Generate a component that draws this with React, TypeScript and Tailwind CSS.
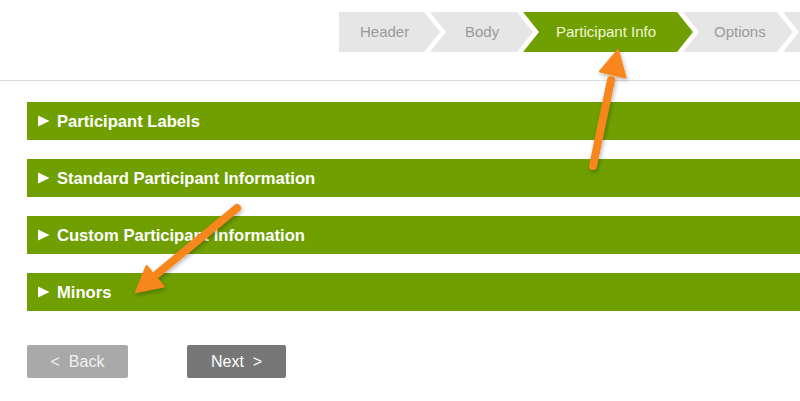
import React from "react";

const clipFirst =
  "[clip-path:polygon(0_0,calc(100%_-_16px)_0,100%_50%,calc(100%_-_16px)_100%,0_100%)]";
const clipMid =
  "[clip-path:polygon(0_0,calc(100%_-_16px)_0,100%_50%,calc(100%_-_16px)_100%,0_100%,16px_50%)]";

function Bar({ label }: { label: string }) {
  return (
    <div className="h-[38px] bg-[#6f9f00] flex items-center pl-[11px] text-white font-bold text-[16.6px]">
      <svg width="12" height="12" viewBox="0 0 12 12" className="mr-[7px]">
        <polygon points="0,0.5 11.5,6 0,11.5" fill="#ffffff" />
      </svg>
      <span className="relative top-[1px]">{label}</span>
    </div>
  );
}

export default function App() {
  return (
    <div className="relative w-[800px] h-[401px] bg-white overflow-hidden font-['Liberation_Sans',Arial,sans-serif]">
      <div className="h-[81px] border-b border-[#dcdcdc] pt-[12px] pl-[339px] flex">
        <div className={`h-[40px] w-[101px] shrink-0 bg-[#e6e6e6] text-[#9a9a9a] text-[15px] flex items-center pl-[21px] ${clipFirst}`}>
          Header
        </div>
        <div className={`h-[40px] w-[103px] shrink-0 -ml-[10px] bg-[#e6e6e6] text-[#9a9a9a] text-[15px] flex items-center pl-[35px] ${clipMid}`}>
          Body
        </div>
        <div className={`h-[40px] w-[170px] shrink-0 -ml-[10px] bg-[#6f9f00] text-[#f2f7d8] text-[15px] flex items-center pl-[33px] ${clipMid}`}>
          Participant Info
        </div>
        <div className={`h-[40px] w-[110px] shrink-0 -ml-[10px] bg-[#e6e6e6] text-[#9a9a9a] text-[15px] flex items-center pl-[31px] ${clipMid}`}>
          Options
        </div>
        <div className={`h-[40px] w-[110px] shrink-0 -ml-[10px] bg-[#e6e6e6] ${clipMid}`} />
      </div>

      <div className="pl-[27px] pt-[21px] flex flex-col gap-[19px]">
        <Bar label="Participant Labels" />
        <Bar label="Standard Participant Information" />
        <Bar label="Custom Participant Information" />
        <Bar label="Minors" />
      </div>

      <div className="pl-[27px] mt-[34px] flex gap-[59px]">
        <div className="w-[101px] h-[33px] bg-[#a9a9a9] rounded-[2px] text-[#f2f2f2] text-[16px] flex items-center justify-center">
          <span>&lt;&nbsp;&nbsp;Back</span>
        </div>
        <div className="w-[99px] h-[33px] bg-[#777777] rounded-[2px] text-white text-[16px] flex items-center justify-center">
          <span>Next&nbsp;&nbsp;&gt;</span>
        </div>
      </div>

      <svg
        className="absolute left-0 top-0 pointer-events-none"
        width="800"
        height="401"
        viewBox="0 0 800 401"
      >
        <defs>
          <filter id="sh" x="-20%" y="-20%" width="140%" height="140%">
            <feDropShadow dx="1" dy="2" stdDeviation="2" floodColor="#000" floodOpacity="0.3" />
          </filter>
        </defs>
        <g filter="url(#sh)" fill="#f7861f" stroke="#f7861f">
          <line x1="593" y1="166" x2="611" y2="80" strokeWidth="8" strokeLinecap="round" />
          <polygon points="618,50 625.5,77.5 600,71.5" strokeWidth="2" strokeLinejoin="round" />
          <line x1="237" y1="208" x2="157" y2="274" strokeWidth="8" strokeLinecap="round" />
          <polygon points="136,292 146.5,266 163.5,286.5" strokeWidth="2" strokeLinejoin="round" />
        </g>
      </svg>
    </div>
  );
}
